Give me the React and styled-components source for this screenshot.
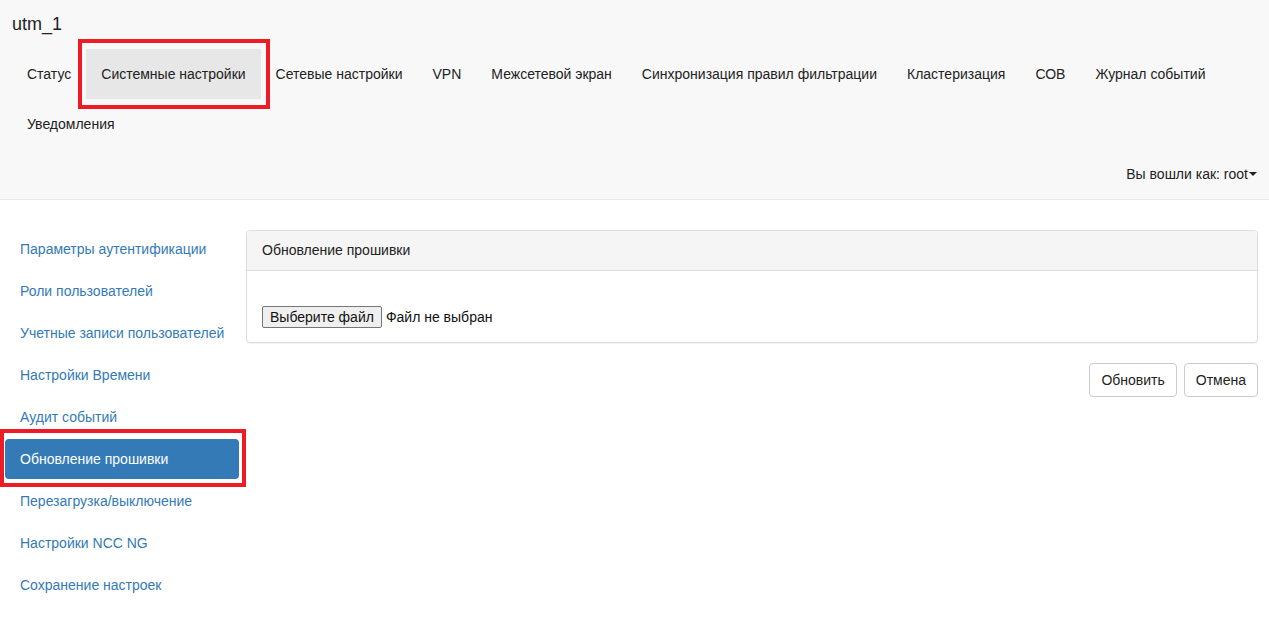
import React from 'react'
import styled, { createGlobalStyle } from 'styled-components'

const GlobalStyle = createGlobalStyle`
    body {
        margin: 0;
        background: #fff;
        font-family: "Liberation Sans", Arial, sans-serif;
        font-size: 14px;
        line-height: 20px;
        color: #333;
    }
`

const Navbar = styled.div`
    background-color: #f8f8f8;
    border-bottom: 1px solid #e7e7e7;
    padding: 0 12px 0 12px;
`

const Brand = styled.div`
    height: 49px;
    font-size: 18px;
    line-height: 49px;
    color: #222;
`

const NavList = styled.ul`
    list-style: none;
    margin: 0;
    padding: 0;
    display: flex;
    flex-wrap: wrap;
`

const NavItem = styled.li`
    position: relative;
    padding: 15px;
    line-height: 20px;
    color: #222;
    white-space: nowrap;
    background-color: ${p => (p.$active ? '#e7e7e7' : 'transparent')};
    cursor: pointer;

    ${p => p.$marked && `
        &::after {
            content: '';
            position: absolute;
            inset: -10px -9px -10px -8px;
            border: 4px solid #ed1c24;
            pointer-events: none;
        }
    `}
`

const UserRow = styled.div`
    display: flex;
    justify-content: flex-end;
    align-items: center;
    height: 50px;
    color: #222;
`

const Caret = styled.span`
    display: inline-block;
    width: 0;
    height: 0;
    margin-left: 1px;
    border-top: 4px solid #222;
    border-left: 4px solid transparent;
    border-right: 4px solid transparent;
`

const Layout = styled.div`
    display: flex;
    gap: 7px;
    padding: 20px 11px 0 5px;
`

const Sidebar = styled.ul`
    list-style: none;
    margin: 0;
    padding: 7px 0 0;
    width: 234px;
    flex-shrink: 0;
`

const Pill = styled.li`
    position: relative;
    margin-top: 2px;
    padding: 10px 15px;
    line-height: 20px;
    white-space: nowrap;
    border-radius: 4px;
    color: ${p => (p.$active ? '#fff' : '#337ab7')};
    background-color: ${p => (p.$active ? '#337ab7' : 'transparent')};
    cursor: pointer;

    ${p => p.$marked && `
        &::after {
            content: '';
            position: absolute;
            inset: -10px -7px -8px -5px;
            border: 4px solid #ed1c24;
            pointer-events: none;
        }
    `}
`

const Main = styled.div`
    flex: 1;
    padding-top: 10px;
`

const Panel = styled.div`
    border: 1px solid #ddd;
    border-radius: 4px;
    background: #fff;
    box-shadow: 0 1px 1px rgba(0, 0, 0, 0.05);
    margin-bottom: 20px;
`

const PanelHeading = styled.div`
    background-color: #f5f5f5;
    border-bottom: 1px solid #ddd;
    border-radius: 3px 3px 0 0;
    padding: 9px 15px 10px;
    color: #222;
`

const PanelBody = styled.div`
    padding: 35px 15px 14px;
    display: flex;
    align-items: center;
    gap: 4px;
    color: #111;
`

const FileButton = styled.button`
    font-family: inherit;
    font-size: 14px;
    line-height: 16px;
    padding: 2px 7px;
    color: #111;
    background: #efefef;
    border: 1px solid #767676;
    border-radius: 2px;
`

const Actions = styled.div`
    display: flex;
    justify-content: flex-end;
    gap: 7px;
`

const Button = styled.button`
    font-family: inherit;
    font-size: 14px;
    line-height: 20px;
    padding: 6px 11px;
    color: #222;
    background: #fff;
    border: 1px solid #ccc;
    border-radius: 4px;
    cursor: pointer;
`

const topItems = [
    'Статус',
    'Системные настройки',
    'Сетевые настройки',
    'VPN',
    'Межсетевой экран',
    'Синхронизация правил фильтрации',
    'Кластеризация',
    'СОВ',
    'Журнал событий',
]

const sideItems = [
    'Параметры аутентификации',
    'Роли пользователей',
    'Учетные записи пользователей',
    'Настройки Времени',
    'Аудит событий',
    'Обновление прошивки',
    'Перезагрузка/выключение',
    'Настройки NCC NG',
    'Сохранение настроек',
]

export default function App() {
    return (
        <>
            <GlobalStyle />
            <Navbar>
                <Brand>utm_1</Brand>
                <NavList>
                    {topItems.map(item => (
                        <NavItem
                            key={item}
                            $active={item === 'Системные настройки'}
                            $marked={item === 'Системные настройки'}
                        >
                            {item}
                        </NavItem>
                    ))}
                    <NavItem style={{ flexBasis: '100%' }}>Уведомления</NavItem>
                </NavList>
                <UserRow>
                    Вы вошли как: root<Caret />
                </UserRow>
            </Navbar>
            <Layout>
                <Sidebar>
                    {sideItems.map(item => (
                        <Pill
                            key={item}
                            $active={item === 'Обновление прошивки'}
                            $marked={item === 'Обновление прошивки'}
                        >
                            {item}
                        </Pill>
                    ))}
                </Sidebar>
                <Main>
                    <Panel>
                        <PanelHeading>Обновление прошивки</PanelHeading>
                        <PanelBody>
                            <FileButton>Выберите файл</FileButton>
                            <span>Файл не выбран</span>
                        </PanelBody>
                    </Panel>
                    <Actions>
                        <Button>Обновить</Button>
                        <Button>Отмена</Button>
                    </Actions>
                </Main>
            </Layout>
        </>
    )
}
